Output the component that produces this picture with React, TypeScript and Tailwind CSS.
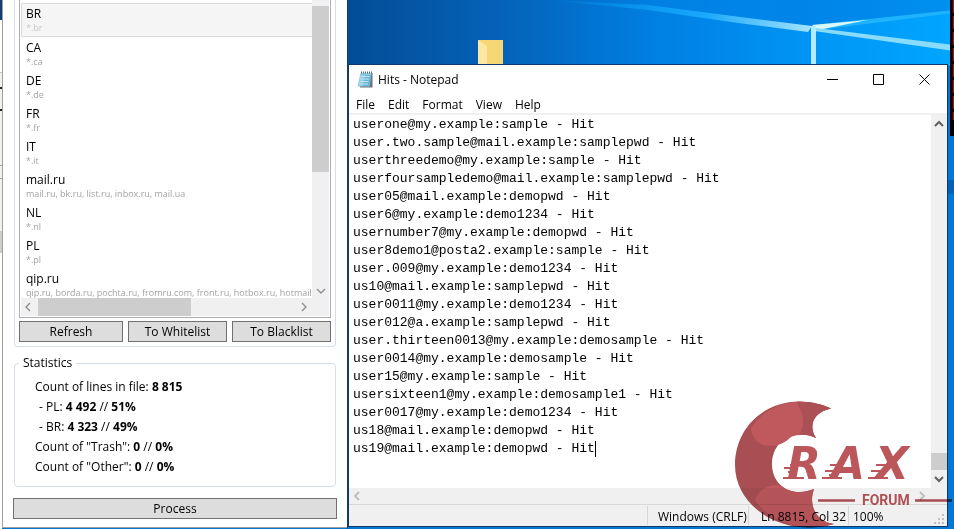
import type { ReactNode } from 'react';

interface Zone {
  name: string;
  hosts: string;
}

const ZONES: Zone[] = [
  { name: 'BR', hosts: '*.br' },
  { name: 'CA', hosts: '*.ca' },
  { name: 'DE', hosts: '*.de' },
  { name: 'FR', hosts: '*.fr' },
  { name: 'IT', hosts: '*.it' },
  { name: 'mail.ru', hosts: 'mail.ru, bk.ru, list.ru, inbox.ru, mail.ua' },
  { name: 'NL', hosts: '*.nl' },
  { name: 'PL', hosts: '*.pl' },
  { name: 'qip.ru', hosts: 'qip.ru, borda.ru, pochta.ru, fromru.com, front.ru, hotbox.ru, hotmail.ru' },
];

// placeholder accounts only
const LINES = [
  'userone@my.example:sample - Hit',
  'user.two.sample@mail.example:samplepwd - Hit',
  'userthreedemo@my.example:sample - Hit',
  'userfoursampledemo@mail.example:samplepwd - Hit',
  'user05@mail.example:demopwd - Hit',
  'user6@my.example:demo1234 - Hit',
  'usernumber7@my.example:demopwd - Hit',
  'user8demo1@posta2.example:sample - Hit',
  'user.009@my.example:demo1234 - Hit',
  'us10@mail.example:samplepwd - Hit',
  'user0011@my.example:demo1234 - Hit',
  'user012@a.example:samplepwd - Hit',
  'user.thirteen0013@my.example:demosample - Hit',
  'user0014@my.example:demosample - Hit',
  'user15@my.example:sample - Hit',
  'usersixteen1@my.example:demosample1 - Hit',
  'user0017@my.example:demo1234 - Hit',
  'us18@mail.example:demopwd - Hit',
  'us19@mail.example:demopwd - Hit',
];

const CHEVRONS = {
  up: 'M1 7 L5 3 L9 7',
  down: 'M1 3 L5 7 L9 3',
  left: 'M7 1 L3 5 L7 9',
  right: 'M3 1 L7 5 L3 9',
};

function Chevron({ dir, color, weight }: { dir: keyof typeof CHEVRONS; color: string; weight: number }) {
  return (
    <svg width="10" height="10" viewBox="0 0 10 10" fill="none" stroke={color} strokeWidth={weight} className="shrink-0">
      <path d={CHEVRONS[dir]} />
    </svg>
  );
}

function FlatButton({ children, className }: { children: ReactNode; className: string }) {
  return (
    <button className={`h-[21px] border border-[#707070] bg-[#dddddd] text-xs leading-[18px] ${className}`}>
      {children}
    </button>
  );
}

function ZoneList() {
  return (
    <div className="flex min-h-0 flex-1 flex-col border border-t-0 border-[#abadb3] px-px pb-px">
      <div className="flex min-h-0 flex-1">
        <ul className="min-w-0 flex-1 overflow-hidden pt-[3px]">
          {ZONES.map((zone, i) => (
            <li
              key={zone.name}
              className={`border px-1 whitespace-nowrap ${
                i === 0 ? 'h-[34px] border-r-0 border-[#dadada] bg-[#f5f5f5]' : 'h-[33px] border-transparent'
              }`}
            >
              <p className="pt-0.5 text-xs leading-4 text-black">{zone.name}</p>
              <p className={`text-[9px] leading-3 ${i === 0 ? 'text-[#c8c8c8]' : 'text-[#a3a3a3]'}`}>{zone.hosts}</p>
            </li>
          ))}
        </ul>
        <div className="flex w-[17px] flex-col items-center bg-[#f0f0f0] pt-1.5">
          <div className="h-[166px] w-full bg-[#cdcdcd]" />
          <div className="mt-auto mb-0.5">
            <Chevron dir="down" color="#8a8a8a" weight={1.3} />
          </div>
        </div>
      </div>
      <div className="flex h-[18px] items-center bg-[#f0f0f0] pr-[20px] pl-0.5">
        <Chevron dir="left" color="#8a8a8a" weight={1.3} />
        <div className="ml-[5px] h-full w-[153px] bg-[#cdcdcd]" />
        <div className="ml-auto">
          <Chevron dir="right" color="#8a8a8a" weight={1.3} />
        </div>
      </div>
    </div>
  );
}

function Statistics() {
  return (
    <fieldset className="mx-[11px] mt-[8px] h-[132px] rounded-[4px] border border-[#d5dfe5] pl-[20px] text-xs">
      <legend className="-ml-4 px-1 leading-4">Statistics</legend>
      <div className="pt-[6px] leading-5">
        <p>Count of lines in file: <b>8 815</b></p>
        <p className="pl-1">- PL: <b>4 492</b> // <b>51%</b></p>
        <p className="pl-1">- BR: <b>4 323</b> // <b>49%</b></p>
        <p>Count of "Trash": <b>0</b> // <b>0%</b></p>
        <p>Count of "Other": <b>0</b> // <b>0%</b></p>
      </div>
    </fieldset>
  );
}

function SorterWindow() {
  return (
    <section className="mb-px flex min-w-0 flex-1 flex-col border-b border-l border-[#a0a0a0] bg-white">
      <div className="mx-[11px] flex h-[347px] flex-col rounded-b-[4px] border border-t-0 border-[#d5dfe5] px-1 pb-1">
        <ZoneList />
        <div className="mt-[3px] flex gap-[5px]">
          <FlatButton className="w-[104px]">Refresh</FlatButton>
          <FlatButton className="flex-1">To Whitelist</FlatButton>
          <FlatButton className="flex-1">To Blacklist</FlatButton>
        </div>
      </div>
      <Statistics />
      <FlatButton className="mx-[10px] mt-[11px]">Process</FlatButton>
    </section>
  );
}

function NotepadIcon() {
  return (
    <svg width="16" height="17" viewBox="0 0 16 17">
      <path d="M4 2 H15.5 V16.5 H3 Z" fill="#6e7478" />
      <path d="M3.5 2 H14.5 L12.5 15.5 H0.5 Z" fill="#8dcbe6" />
      <path d="M8 4 H14 L12 15 H6 Z" fill="#62b3d6" />
      <path d="M3.5 5.5 H12.5 M3 8 H12 M2.5 10.5 H11.5 M2 13 H11" stroke="#c7e7f3" />
      <path d="M4 1.5 H15" stroke="#4e7180" strokeWidth="2" strokeDasharray="1 1" />
    </svg>
  );
}

function Notepad() {
  return (
    <section className="mr-[6px] mb-[2px] flex min-h-0 flex-1 flex-col border border-[#103a63] bg-white text-xs">
      <header className="flex h-[29px] items-center pl-2">
        <NotepadIcon />
        <h1 className="ml-[5px]">Hits - Notepad</h1>
        <div className="ml-auto flex">
          <button aria-label="Minimize" className="flex w-[46px] justify-center">
            <svg width="11" height="11" stroke="#000"><path d="M0 5.5 H11" /></svg>
          </button>
          <button aria-label="Maximize" className="flex w-[46px] justify-center">
            <svg width="11" height="11" stroke="#000" fill="none"><path d="M.5 .5 H10.5 V10.5 H.5 Z" /></svg>
          </button>
          <button aria-label="Close" className="flex w-[46px] justify-center">
            <svg width="11" height="11" stroke="#000"><path d="M.5 .5 L10.5 10.5 M10.5 .5 L.5 10.5" /></svg>
          </button>
        </div>
      </header>
      <nav className="flex h-[21px] items-end gap-[13px] border-b-2 border-[#f0f0f0] pl-[7px]">
        {['File', 'Edit', 'Format', 'View', 'Help'].map((item) => (
          <button key={item} className="leading-[17px]">{item}</button>
        ))}
      </nav>
      <div className="flex min-h-0 flex-1">
        <div className="relative flex min-w-0 flex-1 font-['Liberation_Mono',monospace] text-[13px] leading-[18px]">
          <textarea
            aria-label="Document"
            spellCheck={false}
            wrap="off"
            defaultValue={LINES.join('\n')}
            className="w-full resize-none overflow-hidden pt-px pl-1 text-black outline-none"
          />
          {/* text caret, after the last of the 19 lines */}
          <span className="absolute top-[326px] left-[calc(4px+31ch)] h-4 w-px bg-black" />
        </div>
        <div className="flex w-4 flex-col items-center bg-[#f0f0f0] py-1">
          <Chevron dir="up" color="#606060" weight={2} />
          <div className="mt-auto mb-1 h-[17px] w-full bg-[#cdcdcd]" />
          <Chevron dir="down" color="#606060" weight={2} />
        </div>
      </div>
      <div className="flex h-4 items-center justify-between bg-[#f0f0f0] pr-[20px] pl-[3px]">
        <Chevron dir="left" color="#bfbfbf" weight={2} />
        <Chevron dir="right" color="#bfbfbf" weight={2} />
      </div>
      <footer className="flex h-[22px] justify-end border-t border-[#d7d7d7] bg-[#f0f0f0] py-px leading-[22px] whitespace-nowrap">
        <span className="w-[101px] border-l border-[#d7d7d7] pl-2.5">Windows (CRLF)</span>
        <span className="w-[100px] border-l border-[#d7d7d7] pl-3">Ln 8815, Col 32</span>
        <span className="w-[84px] border-l border-[#d7d7d7] pl-1">100%</span>
        <svg width="15" height="20" fill="#bfbfbf">
          <path d="M10 8h2v2h-2z M6 12h2v2H6z M10 12h2v2h-2z M2 16h2v2H2z M6 16h2v2H6z M10 16h2v2h-2z" />
        </svg>
      </footer>
    </section>
  );
}

function Wallpaper() {
  return (
    <svg viewBox="0 0 606 66" preserveAspectRatio="none" className="absolute inset-x-0 top-0 h-[66px] w-full">
      <defs>
        <linearGradient id="sky">
          <stop offset="0" stopColor="#034c96" />
          <stop offset=".25" stopColor="#0562b8" />
          <stop offset=".5" stopColor="#007fe2" />
          <stop offset=".75" stopColor="#0094f4" />
          <stop offset="1" stopColor="#00a6ff" />
        </linearGradient>
        <linearGradient id="beam">
          <stop offset="0" stopColor="#00a2ff" stopOpacity="0" />
          <stop offset=".6" stopColor="#1ba9fb" />
          <stop offset="1" stopColor="#a4e4ff" />
        </linearGradient>
        <linearGradient id="shade">
          <stop offset="0" stopColor="#0078dc" stopOpacity="0" />
          <stop offset=".5" stopColor="#0084e8" />
          <stop offset="1" stopColor="#0090f0" />
        </linearGradient>
      </defs>
      <path d="M0 0 H606 V66 H0 Z" fill="url(#sky)" />
      <path d="M300 0 H606 V10 L466 28 L300 5 Z" fill="url(#shade)" />
      <path d="M200 0 L300 5 L400 18 L464 26 L460 32 L390 23 L300 10 Z" fill="url(#beam)" />
      <path d="M464 25 L606 10 V13 L470 30 Z" fill="#1fb2ff" />
      <path d="M464 25 L520 20 L470 30 Z" fill="#d9f7ff" />
      <path d="M468 28 L606 45 V51 L466 31 Z" fill="#8adcff" />
      <path d="M463 26 H468 V66 H463 Z" fill="#b4ecff" />
      <path d="M130 40 H155 V66 H130 Z" fill="#f7d774" />
      <path d="M130 40 L139 46 V66 H130 Z" fill="#fde7a4" />
    </svg>
  );
}

function ForumLogo() {
  return (
    <div className="pointer-events-none absolute right-0 bottom-0 h-[130px] w-[220px] text-[#bb565a] mix-blend-multiply">
      <svg width="220" height="130" viewBox="0 0 220 130" className="absolute inset-0">
        <path
          d="M97 9.500 C79 13 74 27 82 39 C58 27 38 44 38 65 C38 87 58 99 80 90 C74 106 82 123 100 125 C50 139 1 109 1 66 C1 19 48 -12 97 9.500 Z"
          fill="#a94f54"
        />
        <path d="M62 3 C75 2 87 5 97 9.500 C79 13 74 27 82 39 C74 35 65 35 57 38 C43 52 19 50 17 29 C27 14 43 4 62 3 Z" fill="#bf595d" />
        <path d="M80 90 C74 106 82 123 100 125 C66 135 34 121 21 101 C25 89 38 84 47 87 C56 94 68 95 80 90 Z" fill="#bf595d" />
        <path d="M62 3 C75 2 87 5 97 9.500 C79 13 74 27 82 39 C76 36 70 35 65 36 C72 26 70 13 62 3 Z" fill="#ab5055" />
        <path d="M84 101.500 H121 M181 101.500 H218" stroke="#b05257" strokeWidth="2.500" />
        <path
          d="M56 66 H64 M50 69 H60 M54 73 H61 M49 79 H70 M96 66 H106 M91 72 H101 M95 76 H100 M88 79 H108 M142 66 H154 M137 72 H150 M134 79 H154"
          stroke="#bb565a"
          strokeWidth="2"
        />
      </svg>
      <div className="absolute top-[45px] left-[53px] flex gap-2.5 font-['DejaVu_Sans',sans-serif] text-[44px] leading-[40px] font-bold italic">
        <span>R</span>
        <span>A</span>
        <span>X</span>
      </div>
      <p className="absolute top-[91px] left-[128px] font-['Roboto',sans-serif] text-[14px] leading-5 font-bold">FORUM</p>
    </div>
  );
}

export default function App() {
  return (
    <main className="relative flex h-screen overflow-hidden bg-[#0078d7] font-['Open_Sans',sans-serif] text-black">
      {/* sliver of the window behind */}
      <div className="flex w-[2px] flex-col bg-[#f0f0f0]">
        <div className="h-5 bg-[#123f70]" />
        <div className="h-[53px] border-b border-[#c8c8c8] bg-white" />
        <div className="mt-[14px] h-0.5 bg-[#222]" />
        <div className="mt-5 h-0.5 bg-[#222]" />
        <div className="mt-[54px] h-[14px] border-y border-[#a0a0a0]" />
        <div className="mt-[52px] h-[22px] bg-[#cdcdcd]" />
        <div className="flex-1 bg-white" />
      </div>
      <div className="flex w-[37%] max-w-[345px]">
        <SorterWindow />
      </div>
      <div className="relative flex min-w-0 flex-1 flex-col border-l border-[#123e6b] pt-[64px]">
        <Wallpaper />
        <div className="relative flex min-h-0 flex-1 flex-col">
          <Notepad />
        </div>
        <div className="absolute top-0 right-0 h-[136px] w-1 bg-black">
          <div className="ml-auto h-[120px] w-px bg-[repeating-linear-gradient(#e00000_0_13px,#000_13px_16px)]" />
        </div>
        <div className="absolute top-[180px] right-0 h-[14px] w-[6px] bg-[#0560b8]" />
      </div>
      <ForumLogo />
    </main>
  );
}
